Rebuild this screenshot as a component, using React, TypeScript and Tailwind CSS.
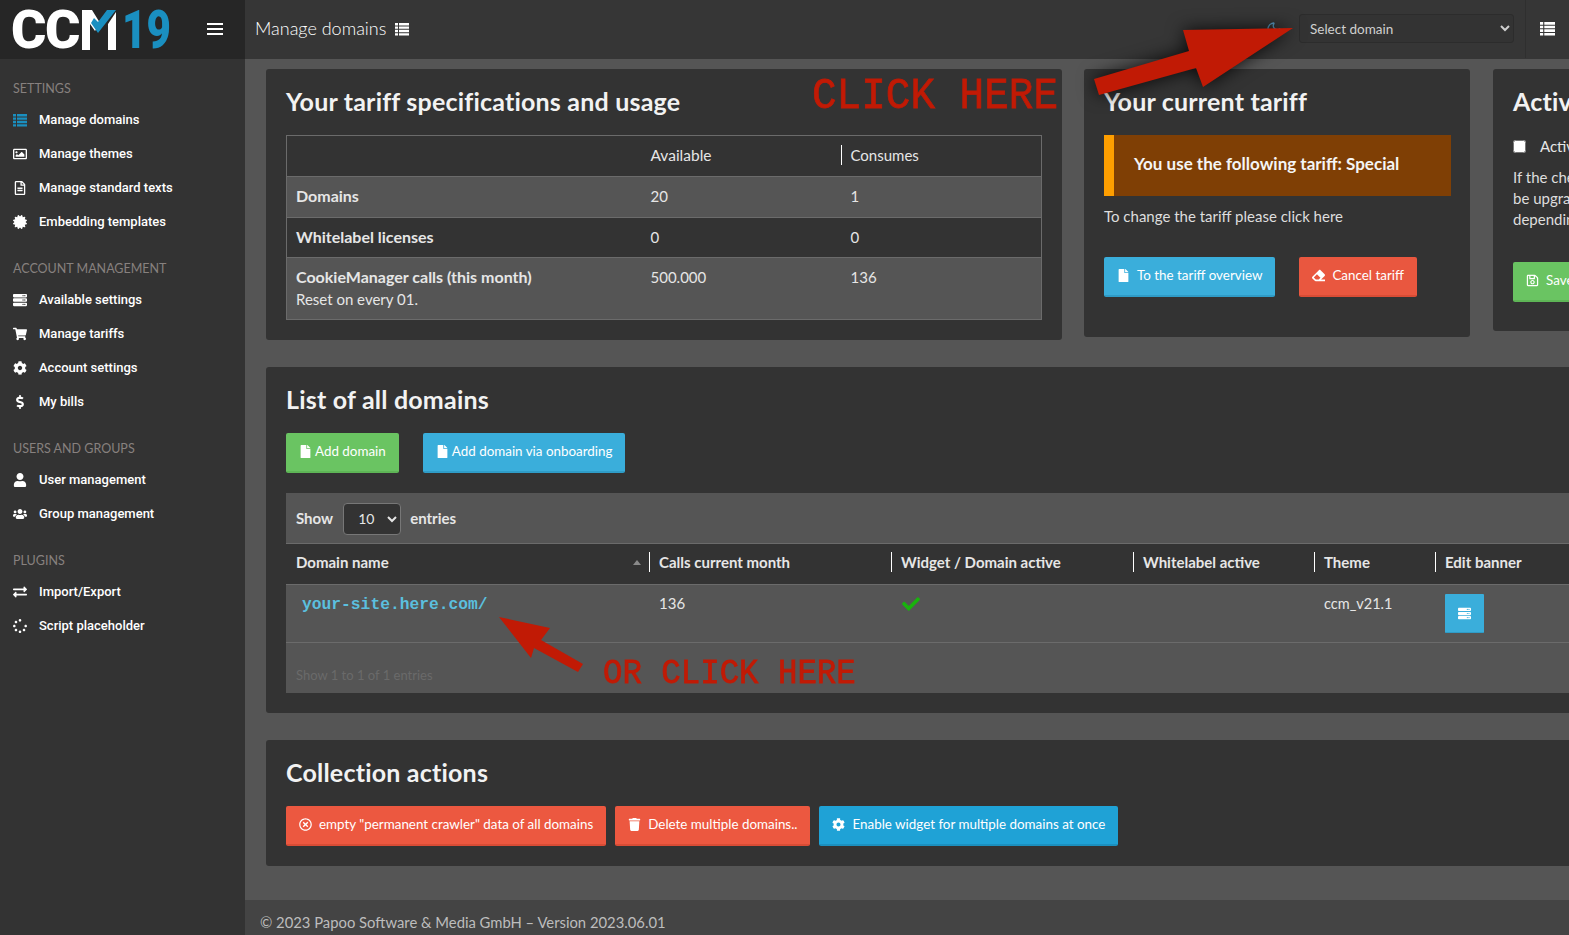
import React from 'react';
import { Moon } from 'lucide-react';
import {
  FaRegImage, FaRegFileAlt, FaCertificate, FaServer, FaShoppingCart, FaCog, FaDollarSign,
  FaUser, FaUsers, FaExchangeAlt, FaSpinner, FaFile, FaEraser, FaRegTimesCircle, FaTrash, FaRegSave, FaCheck,
} from 'react-icons/fa';

function ListIcon({ className }: { className?: string }) {
  return (
    <svg viewBox="0 0 14 14" fill="currentColor" className={className}>
      <path d="M0 1h3v2.4H0zM4 1h10v2.4H4zM0 4.4h3v2.4H0zM4 4.4h10v2.4H4zM0 7.8h3v2.4H0zM4 7.8h10v2.4H4zM0 11.2h3v2.4H0zM4 11.2h10v2.4H4z" />
    </svg>
  );
}

const menu = [
  {
    title: 'Settings',
    items: [
      { label: 'Manage domains', icon: ListIcon, active: true },
      { label: 'Manage themes', icon: FaRegImage },
      { label: 'Manage standard texts', icon: FaRegFileAlt },
      { label: 'Embedding templates', icon: FaCertificate },
    ],
  },
  {
    title: 'Account management',
    items: [
      { label: 'Available settings', icon: FaServer },
      { label: 'Manage tariffs', icon: FaShoppingCart },
      { label: 'Account settings', icon: FaCog },
      { label: 'My bills', icon: FaDollarSign },
    ],
  },
  {
    title: 'Users and groups',
    items: [
      { label: 'User management', icon: FaUser },
      { label: 'Group management', icon: FaUsers },
    ],
  },
  {
    title: 'Plugins',
    items: [
      { label: 'Import/Export', icon: FaExchangeAlt },
      { label: 'Script placeholder', icon: FaSpinner },
    ],
  },
];

function Logo() {
  return (
    <div className="flex items-center font-['Roboto',sans-serif] font-black text-[54px] leading-[54px] text-white">
      <span className="tracking-[-1.5px]">CC</span>
      <svg width="36" height="40" viewBox="0 0 36 40" className="ml-[2px]">
        <path d="M1 0h10l8 13-5 8-5-7v26H1z" fill="#fff" />
        <path d="M27 14l8-12v38h-8z" fill="#fff" />
        <path d="M10 13l7 10L35 0h-9L17 12l-4-4z" fill="#1a8fc0" />
      </svg>
      <span className="ml-[5px] inline-block w-[46px] origin-left scale-x-[0.78] text-[#1a8fc0]">19</span>
    </div>
  );
}

function Sidebar() {
  return (
    <aside className="w-[245px] shrink-0 bg-[#333] flex flex-col">
      <div className="h-[59px] shrink-0 bg-[#262626] flex items-center justify-between pl-[11px] pr-[22px]">
        <Logo />
        <svg width="16" height="12" viewBox="0 0 16 12" fill="#fff" className="mb-[2px]">
          <path d="M0 0h16v2H0zM0 5h16v2H0zM0 10h16v2H0z" />
        </svg>
      </div>
      <nav className="pt-[20px] flex flex-col gap-[20px]">
        {menu.map((group) => (
          <div key={group.title}>
            <div className="h-[20px] mb-[4px] px-[13px] leading-[20px] text-[12.5px] uppercase text-[#87817f] font-['Lato',sans-serif]">
              {group.title}
            </div>
            {group.items.map((item) => (
              <div key={item.label} className="h-[34px] px-[13px] flex items-center font-['Roboto',sans-serif] font-medium text-[13px] text-white">
                <span className="w-[14px] mr-[12px] flex justify-center">
                  <item.icon className={`w-[14px] h-[14px] ${item.active ? 'text-[#1a8fc0]' : 'text-white'}`} />
                </span>
                {item.label}
              </div>
            ))}
          </div>
        ))}
      </nav>
    </aside>
  );
}

function Header() {
  return (
    <header className="h-[59px] shrink-0 bg-[#363636] flex items-center pl-[10px] pb-[2px] text-white">
      <span className="text-[18px] font-light">Manage domains</span>
      <ListIcon className="ml-[9px] w-[14px] h-[14px]" />
      <Moon className="ml-auto w-[16px] h-[16px] text-[#5a9fc8]" />
      <select className="ml-[17px] w-[215px] h-[29px] pl-[6px] bg-[#333] border border-[#2c2c2c] rounded-[3px] text-[13.5px] text-[#cfcfcf]">
        <option>Select domain</option>
      </select>
      <div className="ml-[11px] w-[44px] h-[58px] border-l border-[#2f2f2f] flex items-center justify-center">
        <ListIcon className="w-[15px] h-[15px]" />
      </div>
    </header>
  );
}

function Btn({ color, icon: Icon, tight, children }: { color: string; icon: React.ComponentType<{ className?: string }>; tight?: boolean; children: React.ReactNode }) {
  return (
    <button className={`h-[40px] px-[13px] pb-[2px] flex items-center ${tight ? 'gap-[3px]' : 'gap-[7px]'} rounded-[2px] border-b-2 text-[13.4px] text-white whitespace-nowrap ${color}`}>
      <Icon className="w-[13px] h-[13px]" />
      {children}
    </button>
  );
}

function CardTitle({ children }: { children: React.ReactNode }) {
  return <h2 className="h-[25px] mb-[21px] leading-[25px] text-[25px] tracking-[0.2px] font-bold text-[#f2f2f2] whitespace-nowrap">{children}</h2>;
}

function TariffCard() {
  return (
    <section className="w-[796px] shrink-0 bg-[#333] rounded-[3px] p-[20px]">
      <CardTitle>Your tariff specifications and usage</CardTitle>
      <table className="w-[756px] table-fixed border-collapse border border-[#6b6b6b] text-[15px] text-[#e6e6e6]">
        <colgroup>
          <col className="w-[354px]" />
          <col className="w-[200px]" />
          <col />
        </colgroup>
        <tbody>
          <tr className="h-[41px]">
            <td />
            <td className="pl-[10px] pb-[1px] text-[15.5px]">Available</td>
            <td className="pb-[2px]">
              <div className="h-[20px] leading-[20px] border-l border-white pl-[9px]">Consumes</div>
            </td>
          </tr>
          <tr className="h-[41px] bg-[#555] border-t border-[#6b6b6b]">
            <td className="pl-[9px] pb-[3px] font-bold text-[16px]">Domains</td>
            <td className="pl-[10px] pb-[1px]">20</td>
            <td className="pl-[10px] pb-[1px]">1</td>
          </tr>
          <tr className="h-[40px] border-t border-[#6b6b6b]">
            <td className="pl-[9px] pb-[2px] font-bold text-[16px]">Whitelabel licenses</td>
            <td className="pl-[10px]">0</td>
            <td className="pl-[10px]">0</td>
          </tr>
          <tr className="h-[62px] bg-[#555] border-t border-[#6b6b6b] align-top">
            <td className="pl-[9px] pt-[8px] leading-[22px]">
              <div className="font-bold text-[16px]">CookieManager calls (this month)</div>
              <div>Reset on every 01.</div>
            </td>
            <td className="pl-[10px] pt-[8px] leading-[22px]">500.000</td>
            <td className="pl-[10px] pt-[8px] leading-[22px]">136</td>
          </tr>
        </tbody>
      </table>
    </section>
  );
}

function CurrentTariffCard() {
  return (
    <section className="w-[386px] shrink-0 bg-[#333] rounded-[3px] pt-[20px] px-[20px] pb-[40px]">
      <CardTitle>Your current tariff</CardTitle>
      <div className="w-[347px] h-[61px] pl-[20px] pb-[3px] flex items-center bg-[#7f3f05] border-l-[10px] border-[#ff9f00] text-[17px] font-bold text-[#f5f5f5] whitespace-nowrap">
        You use the following tariff: Special
      </div>
      <p className="mt-[10px] h-[20px] leading-[20px] text-[15px] text-[#dedede]">To change the tariff please click here</p>
      <div className="mt-[31px] flex gap-[24px]">
        <Btn color="bg-[#3aaedb] border-[#2f9cc7]" icon={FaFile}>To the tariff overview</Btn>
        <Btn color="bg-[#e9573f] border-[#d94c35]" icon={FaEraser}>Cancel tariff</Btn>
      </div>
    </section>
  );
}

function ActivateCard() {
  return (
    <section className="w-[400px] ml-[1px] shrink-0 bg-[#333] rounded-[3px] pt-[20px] px-[20px] pb-[29px] whitespace-nowrap">
      <CardTitle>Activate automatic upgrade</CardTitle>
      <label className="flex items-center gap-[14px] h-[22px] text-[15px] text-[#e6e6e6]">
        <input type="checkbox" className="w-[13px] h-[13px]" />
        Activate
      </label>
      <p className="mt-[10px] leading-[21px] text-[15px] text-[#dedede]">
        If the checkbox is set your tariff will
        <br />
        be upgraded automatically
        <br />
        depending on your usage.
      </p>
      <div className="mt-[32px]">
        <Btn color="bg-[#6ac462] border-[#5eb556]" icon={FaRegSave}>Save</Btn>
      </div>
    </section>
  );
}

function Th({ children }: { children: React.ReactNode }) {
  return (
    <th className="p-0 pb-[5px] text-left font-bold">
      <div className="h-[20px] leading-[20px] border-l border-white pl-[9px]">{children}</div>
    </th>
  );
}

function DomainsCard() {
  return (
    <section className="w-[1400px] bg-[#333] rounded-[3px] p-[20px]">
      <CardTitle>List of all domains</CardTitle>
      <div className="flex gap-[24px]">
        <Btn tight color="bg-[#6ac462] border-[#5eb556]" icon={FaFile}>Add domain</Btn>
        <Btn tight color="bg-[#3aaedb] border-[#2f9cc7]" icon={FaFile}>Add domain via onboarding</Btn>
      </div>
      <div className="mt-[20px] bg-[#555] text-[15px] text-[#e6e6e6]">
        <div className="h-[50px] pl-[10px] pt-[1px] flex items-center gap-[10px] font-bold">
          Show
          <select className="w-[58px] h-[32px] pl-[10px] bg-[#333] border border-[#777] rounded-[4px] font-normal text-[14px] text-[#e6e6e6]">
            <option>10</option>
          </select>
          <span className="-ml-[1px]">entries</span>
        </div>
        <table className="w-full table-fixed border-collapse">
          <colgroup>
            <col className="w-[363px]" />
            <col className="w-[242px]" />
            <col className="w-[242px]" />
            <col className="w-[181px]" />
            <col className="w-[121px]" />
            <col />
          </colgroup>
          <thead>
            <tr className="h-[41px] bg-[#333] border-y border-[#6b6b6b]">
              <th className="p-0 pl-[10px] pr-[8px] pb-[3px] text-left font-bold">
                <div className="flex items-center justify-between">
                  Domain name
                  <span className="w-0 h-0 border-x-[4px] border-x-transparent border-b-[5px] border-b-[#8a8a8a]" />
                </div>
              </th>
              <Th>Calls current month</Th>
              <Th>Widget / Domain active</Th>
              <Th>Whitelabel active</Th>
              <Th>Theme</Th>
              <Th>Edit banner</Th>
            </tr>
          </thead>
          <tbody>
            <tr className="h-[58px] align-top border-b border-[#6b6b6b]">
              <td className="pl-[16px] pt-[10px] leading-[20px] font-['Liberation_Mono',monospace] font-bold text-[16.3px] text-[#5bbfde]">your-site.here.com/</td>
              <td className="pl-[10px] pt-[8px] leading-[20px]">136</td>
              <td className="pl-[10px] pt-[10px]">
                <FaCheck className="w-[20px] h-[18px] text-[#19b30d]" />
              </td>
              <td />
              <td className="pl-[10px] pt-[9px] leading-[20px] text-[14.5px]">ccm_v21.1</td>
              <td className="pl-[10px] pt-[9px]">
                <div className="w-[39px] h-[39px] flex items-center justify-center bg-[#3aaedb] border-b border-[#2f9cc7] rounded-[1px]">
                  <FaServer className="w-[13px] h-[13px] text-white" />
                </div>
              </td>
            </tr>
          </tbody>
        </table>
        <div className="h-[50px] pl-[10px] pt-[22px] leading-[20px] text-[13px] text-[#6a6a6a]">Show 1 to 1 of 1 entries</div>
      </div>
    </section>
  );
}

function CollectionCard() {
  return (
    <section className="w-[1400px] bg-[#333] rounded-[3px] p-[20px]">
      <CardTitle>Collection actions</CardTitle>
      <div className="flex gap-[9px]">
        <Btn color="bg-[#ec5840] border-[#d94c35]" icon={FaRegTimesCircle}>empty "permanent crawler" data of all domains</Btn>
        <Btn color="bg-[#ec5840] border-[#d94c35]" icon={FaTrash}>Delete multiple domains..</Btn>
        <Btn color="bg-[#1fa2d6] border-[#1b90bf]" icon={FaCog}>Enable widget for multiple domains at once</Btn>
      </div>
    </section>
  );
}

// red arrows and captions that were painted over the screenshot
function Annotations() {
  return (
    <div className="absolute inset-0 pointer-events-none font-['Liberation_Mono',monospace] text-[#c11a05] [-webkit-text-stroke:0.7px_#c11a05]">
      <svg width="1569" height="935" className="absolute inset-0 drop-shadow-[0_0_9px_rgba(0,0,0,0.85)]">
        <polygon points="1293,28 1183,30 1189,51 1094,79 1099,95 1196,68 1203,87" fill="#c11a05" />
      </svg>
      <svg width="1569" height="935" className="absolute inset-0">
        <polygon points="499,617 550,628 541,640 583,664 578,672 534,648 531,658" fill="#c11a05" />
      </svg>
      <div className="absolute left-[812px] top-[72px] text-[41px] leading-[48px] whitespace-nowrap scale-y-110">CLICK HERE</div>
      <div className="absolute left-[603px] top-[655px] text-[32.4px] leading-[38px] whitespace-nowrap scale-y-110">OR CLICK HERE</div>
    </div>
  );
}

export default function App() {
  return (
    <div className="relative w-[1569px] h-[935px] overflow-hidden flex bg-[#555] font-['Lato',sans-serif]">
      <Sidebar />
      <div className="flex-1 min-w-0 flex flex-col">
        <Header />
        <main className="flex-1 min-h-0 pt-[10px] pl-[21px] flex flex-col items-start">
          <div className="flex items-start gap-[22px]">
            <TariffCard />
            <CurrentTariffCard />
            <ActivateCard />
          </div>
          <div className="mt-[27px]">
            <DomainsCard />
          </div>
          <div className="mt-[27px]">
            <CollectionCard />
          </div>
        </main>
        <footer className="h-[35px] shrink-0 bg-[#444] pl-[15px] pt-[12px] leading-[20px] text-[14.8px] text-[#bdbdbd]">
          © 2023 Papoo Software &amp; Media GmbH – Version 2023.06.01
        </footer>
      </div>
      <Annotations />
    </div>
  );
}
